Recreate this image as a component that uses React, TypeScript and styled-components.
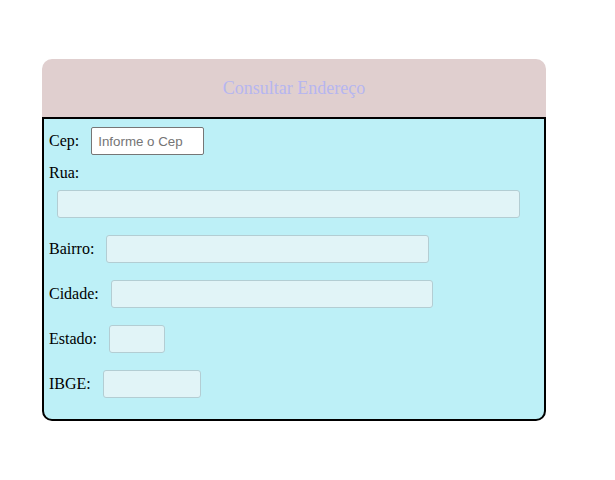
import React from "react";
import styled, { createGlobalStyle } from "styled-components";

const Global = createGlobalStyle`
  html, body { margin: 0; padding: 0; background: #ffffff; }
  body { font-family: "Liberation Serif", "Times New Roman", serif; font-size: 16px; color: #000; }
`;

const Page = styled.div`
  padding: 59px 0 0 42px;
`;

const Card = styled.div`
  width: 504px;
`;

const Header = styled.div`
  height: 58px;
  background: #e0cfcf;
  border-radius: 10px 10px 0 0;
  display: flex;
  align-items: center;
  justify-content: center;
`;

const Title = styled.h3`
  margin: 0;
  font-weight: normal;
  font-size: 18px;
  color: #b6b6f0;
  font-family: "Liberation Serif", "Times New Roman", serif;
`;

const Body = styled.div`
  background: #bdf0f7;
  border: 2px solid #000;
  border-radius: 0 0 10px 10px;
  padding: 8px 5px 21px 5px;
  display: flex;
  flex-direction: column;
`;

const Row = styled.div<{ $mt?: number }>`
  display: flex;
  align-items: center;
  gap: 12px;
  height: 28px;
  margin-top: ${(p) => p.$mt ?? 0}px;
`;

const Label = styled.label`
  font-size: 16px;
  line-height: 18px;
`;

const BlockLabel = styled(Label)`
  display: block;
  margin-top: 9px;
`;

const CepInput = styled.input`
  box-sizing: border-box;
  width: 113px;
  height: 28px;
  border: 1px solid #767676;
  border-radius: 2px;
  background: #fff;
  padding: 0 6px;
  font-family: "Liberation Sans", Arial, sans-serif;
  font-size: 13.33px;
  outline: none;
  &::placeholder { color: #757575; }
`;

const Field = styled.input<{ $w: number }>`
  box-sizing: border-box;
  width: ${(p) => p.$w}px;
  height: 28px;
  border: 1px solid #b3cdd3;
  border-radius: 3px;
  background: #e1f4f7;
  padding: 0 6px;
  font-family: "Liberation Sans", Arial, sans-serif;
  font-size: 13.33px;
  outline: none;
`;

const RuaField = styled(Field)`
  margin: 8px 0 0 8px;
`;

export default function App() {
  return (
    <>
      <Global />
      <Page>
        <Card>
          <Header>
            <Title>Consultar Endereço</Title>
          </Header>
          <Body>
            <Row>
              <Label>Cep:</Label>
              <CepInput placeholder="Informe o Cep" />
            </Row>
            <BlockLabel>Rua:</BlockLabel>
            <RuaField $w={463} readOnly />
            <Row $mt={17}>
              <Label>Bairro:</Label>
              <Field $w={323} readOnly />
            </Row>
            <Row $mt={17}>
              <Label>Cidade:</Label>
              <Field $w={322} readOnly />
            </Row>
            <Row $mt={17}>
              <Label>Estado:</Label>
              <Field $w={56} readOnly />
            </Row>
            <Row $mt={17}>
              <Label>IBGE:</Label>
              <Field $w={98} readOnly />
            </Row>
          </Body>
        </Card>
      </Page>
    </>
  );
}
